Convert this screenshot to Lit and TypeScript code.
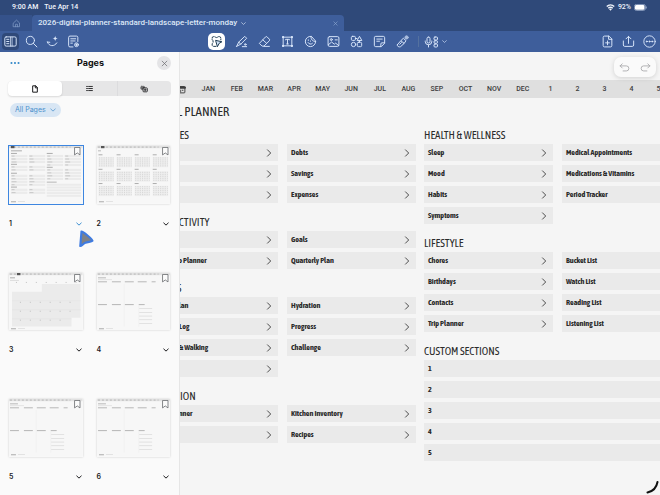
import { LitElement, html, svg, css, nothing, type SVGTemplateResult } from "lit";
import { customElement, property } from "lit/decorators.js";
import { classMap } from "lit/directives/class-map.js";

const icons: Record<string, SVGTemplateResult> = {
  panel: svg`<rect x="1.500" y="3.500" width="21" height="17" rx="2.500"/><path d="M12.500 4v16.500"/><path d="M5 8h4M5 12h4M5 16h4"/><path d="M15.500 4v16.500" opacity=".5"/>`,
  search: svg`<circle cx="10" cy="10" r="7.500"/><path d="M15.500 15.500 22 22"/>`,
  magic: svg`<path d="M2.500 13c3 8.500 13 9 17.500 1.500"/><path d="M2.500 13l4.500.5"/><path d="M17 1.500c.6 3.400 1.600 4.400 5 5-3.400.6-4.400 1.600-5 5-.6-3.400-1.600-4.400-5-5 3.400-.6 4.400-1.600 5-5z" fill="currentColor" stroke="none"/>`,
  outline: svg`<path d="M11 22H5.500a2.500 2.500 0 0 1-2.500-2.500v-15A2.500 2.500 0 0 1 5.500 2h12A2.500 2.500 0 0 1 20 4.500V12"/><path d="M7 7h9M7 11h8M7 15h3"/><circle cx="17.500" cy="18" r="3.500"/><path d="M17.500 16.500v3M16 18h3"/>`,
  lasso: svg`<path d="M11 21H6.500A2.500 2.500 0 0 1 4 18.500V16c2.500-1.500 2.500-6 0-7.500V5.500A2.500 2.500 0 0 1 6.500 3H9c2 2.500 4 2.500 6 0h2.500A2.500 2.500 0 0 1 20 5.500V9" stroke-dasharray="5 2.200"/><path d="M11 10l11 2.500-5 2.800L14 21z" fill="#cfe0f5"/>`,
  pen: svg`<path d="M3 21 7 13 18 2.500l3.500 3.500L10.500 17 3 21z"/><path d="M7 13l3.500 4"/><path d="M13.500 21.500h8"/><circle cx="19" cy="17.500" r="1.500"/>`,
  eraser: svg`<path d="M3 15 14 3.500a2 2 0 0 1 2.800 0L21 7.800a2 2 0 0 1 0 2.800L11 20.500H7.500L3 16z"/><path d="M9 9l7 6.500"/><path d="M11 21h10"/>`,
  text: svg`<path d="M4 5v14M20 5v14M5 4h14M5 20h14"/><path d="M8.500 9V8h7v1M12 8v8.500M10.500 16.500h3"/><rect x="2" y="2" width="3.600" height="3.600" fill="currentColor" stroke="none"/><rect x="18.400" y="2" width="3.600" height="3.600" fill="currentColor" stroke="none"/><rect x="2" y="18.400" width="3.600" height="3.600" fill="currentColor" stroke="none"/><rect x="18.400" y="18.400" width="3.600" height="3.600" fill="currentColor" stroke="none"/>`,
  sticker: svg`<path d="M13 2.500A9.500 9.500 0 1 0 21.500 12z"/><path d="M13 2.500c-1 5 3 10 8.500 9.500"/><path d="M7.500 14c1.500 3 5.500 4 8 1.500"/><path d="M8 9v1M12 11v.5"/>`,
  image: svg`<rect x="2" y="3" width="20" height="18" rx="2.500"/><circle cx="8" cy="8.500" r="1.800"/><path d="M2.500 18l6-5 5 4 2.500-2 5.500 4.500M15 9h4"/>`,
  shapes: svg`<rect x="2.500" y="2.500" width="7.500" height="7.500" rx="2"/><path d="M13.500 9.500 17.500 2.500l4 7z"/><circle cx="6.500" cy="17.500" r="4"/><rect x="13.500" y="13.500" width="8" height="8" rx="2"/><path d="M10 6.500h3M17.500 10v3"/>`,
  note: svg`<path d="M14.500 21.500H5A2.500 2.500 0 0 1 2.500 19V5A2.500 2.500 0 0 1 5 2.500h14A2.500 2.500 0 0 1 21.500 5v9.500z"/><path d="M14.500 21.500v-5a2 2 0 0 1 2-2h5M7 7.500h10M7 11.500h5"/>`,
  laser: svg`<path d="M2.500 18 9 10.500l6 5-6.500 6c-3 1.500-7-.5-6-3.500z"/><path d="M9 10.500 13.500 6l5 4.500-3.500 5M7 17l3-3"/><circle cx="19.500" cy="4.500" r="3" fill="currentColor" opacity=".7"/>`,
  newpage: svg`<path d="M14 2H6.500A2.500 2.500 0 0 0 4 4.500v15A2.500 2.500 0 0 0 6.500 22h11a2.500 2.500 0 0 0 2.500-2.500V8z"/><path d="M14 2v6h6M12 11v7M8.500 14.500h7"/>`,
  share: svg`<path d="M2.500 11v7.500A2.500 2.500 0 0 0 5 21h14a2.500 2.500 0 0 0 2.500-2.500V11M12 15.500V2.500M7.500 7 12 2.500 16.500 7"/>`,
  more: svg`<circle cx="12" cy="12" r="10.500"/><g fill="currentColor"><circle cx="7" cy="12" r="1"/><circle cx="12" cy="12" r="1"/><circle cx="17" cy="12" r="1"/></g>`,
  home: svg`<path d="M4 10.500 12 3l8 7.500V20.500H4z"/><path d="M9.500 20.500V14h5v6.500"/>`,
  down: svg`<path d="M3 8l9 8.500L21 8"/>`,
  right: svg`<path d="M7.500 2.500 17 12l-9.500 9.500"/>`,
  close: svg`<path d="M4 4l16 16M20 4 4 20"/>`,
  dots: svg`<g fill="currentColor" stroke="none"><circle cx="3.500" cy="12" r="2.500"/><circle cx="12" cy="12" r="2.500"/><circle cx="20.500" cy="12" r="2.500"/></g>`,
  page: svg`<path d="M13 2.500H5v19h14V8.500z"/><path d="M13 2.500v6h6"/>`,
  list: svg`<path d="M9 5h13M9 12h13M9 19h13M2 5h3M2 12h3M2 19h3"/>`,
  copies: svg`<rect x="2.500" y="4" width="11" height="9" rx="2" fill="currentColor" opacity=".6"/><rect x="9" y="8.500" width="13" height="12" rx="2.500" fill="#e6e6e7"/><path d="M15.500 11.500v6M12.500 14.500h6"/>`,
  undo: svg`<path d="M7 4 2.500 8.500 7 13M2.500 8.500H16a5.500 5.500 0 0 1 0 11H9"/>`,
  redo: svg`<path d="M17 4l4.500 4.500L17 13M21.500 8.500H8a5.500 5.500 0 0 0 0 11h7"/>`,
  calendar: svg`<rect x="3" y="4" width="18" height="17" rx="2"/><path d="M3 7h18" stroke-width="6"/><path d="M8 14h2M14 14h2M8 18h2"/>`,
};

@customElement("ui-icon")
export class UiIcon extends LitElement {
  @property() name = "";
  @property({ type: Number }) size = 12;
  @property({ type: Number }) weight = 2;

  static styles = css`
    :host { display: inline-flex; flex: none; }
    svg { display: block; fill: none; stroke: currentColor; stroke-linecap: round; stroke-linejoin: round; }
  `;

  render() {
    return html`<svg viewBox="0 0 24 24" width=${this.size} height=${this.size} stroke-width=${this.weight} aria-hidden="true">${icons[this.name]}</svg>`;
  }
}

type ThumbKind = "index" | "year" | "month" | "week";

@customElement("page-thumb")
export class PageThumb extends LitElement {
  @property() kind: ThumbKind = "index";
  @property({ type: Number }) marker = 4;

  static styles = css`
    :host { display: block; width: 100%; }
    svg { display: block; width: 100%; height: auto; }
  `;

  private bar(x: number, y: number, w: number, h = 1, fill = "#aaaaaa") {
    return svg`<rect x=${x} y=${y} width=${w} height=${h} fill=${fill}/>`;
  }

  private index() {
    const blocks = [
      { x: 2, y: 8, rows: 3 }, { x: 2, y: 19, rows: 2 }, { x: 2, y: 28, rows: 4 }, { x: 2, y: 42, rows: 2 },
      { x: 38, y: 8, rows: 4 }, { x: 38, y: 22, rows: 4 },
    ];
    return svg`
      ${this.bar(2, 4.5, 11, 0.8, "#9a9a9a")}
      ${blocks.map((b) => svg`
        ${this.bar(b.x, b.y - 1, 6, 0.7, "#8c8c8c")}
        ${Array.from({ length: b.rows }, (_, r) => [0, 18].map((dx) => svg`
          ${this.bar(b.x + dx, b.y + 1 + r * 3, 16.5, 2.2, "#ebebeb")}
          ${this.bar(b.x + dx + 0.6, b.y + 1.8 + r * 3, 3 + ((r + dx) % 3), 0.6, "#b0b0b0")}
        `))}`)}
      ${this.bar(38, 36, 10, 0.7, "#9a9a9a")}
      ${[0, 1, 2, 3, 4].map((r) => this.bar(38, 38 + r * 2.8, 34.5, 2, "#ebebeb"))}`;
  }

  private year() {
    return svg`
      ${this.bar(1, 4.5, 3, 0.8, "#aaaaaa")}
      ${Array.from({ length: 12 }, (_, i) => {
        const x = 1.5 + (i % 4) * 18.2;
        const y = 9 + Math.floor(i / 4) * 14.5;
        return svg`${this.bar(x, y - 0.5, 4, 0.8, "#999999")}
          <rect x=${x} y=${y + 2} width="15.500" height="10.500" fill="#efefef"/>
          <path d=${[0, 1, 2, 3, 4].map((r) => `M${x + 0.6} ${y + 3 + r * 2}h14.5`).join("")} stroke="#cacaca" stroke-width=".8" stroke-dasharray="1 1.300"/>`;
      })}`;
  }

  private month() {
    return svg`
      ${this.bar(1, 4.5, 5, 0.8, "#999999")}${this.bar(1, 7, 9, 0.6, "#cccccc")}
      <path d="M33 11H72V45H63V54H3V19H33z" fill="#ebebeb"/>
      <path d="M7 9.500h64M11 29.500h60M11 38.500h60M11 47.500h50" stroke="#bababa" stroke-width=".9" stroke-dasharray="1 9"/>
      <path d="M3 28h69M3 37h69M3 46h60" stroke="#e2e2e2" stroke-width=".5"/>`;
  }

  private week() {
    return svg`
      ${this.bar(1, 4.5, 8, 0.8, "#aaaaaa")}${this.bar(1, 6.6, 14, 0.5, "#d0d0d0")}
      ${[1, 15, 28, 41, 55].map((x, i) => this.bar(x, 8.5, i === 4 ? 4 : 9, 0.8, "#a6a6a6"))}
      ${[1, 15, 28, 42].map((x, i) => this.bar(x, 31.5, i === 3 ? 6 : 9, 0.8, "#a6a6a6"))}
      <path d="M27.500 11v43M42 33v21" stroke="#ececec" stroke-width=".5"/>
      ${[0, 1, 2, 3, 4].map((r) => this.bar(42.5, 35.5 + r * 3.8, 13, 0.5, "#cccccc"))}`;
  }

  render() {
    const body = { index: () => this.index(), year: () => this.year(), month: () => this.month(), week: () => this.week() }[this.kind];
    return html`<svg viewBox="0 0 74 58" aria-hidden="true">
      <rect width="74" height="58" fill="#f7f7f7"/>
      <rect width="74" height="2.200" fill="#e2e2e2"/>
      <path d="M1 1.100H62" stroke="#a4a4a4" stroke-width=".7" stroke-dasharray="2 2"/>
      ${this.bar(this.marker, 0, 3.5, 2.2, "#555555")}
      ${body()}
      ${this.bar(2, 55.8, 5, 0.8, "#999999")}${this.bar(9, 55.9, 7, 0.5, "#cccccc")}
      <path d="M66 1.500h5.500v7.500l-2.750-2-2.750 2z" fill="#fbfbfb" stroke="#66696d" stroke-width=".8"/>
    </svg>`;
  }
}

interface Section { title: string; rows: string[][]; wide?: boolean }

const leftSections: Section[] = [
  { title: "FINANCES", rows: [["Income", "Debts"], ["Budget", "Savings"], ["Bills", "Expenses"]] },
  { title: "PRODUCTIVITY", rows: [["Projects", "Goals"], ["Day To-do Planner", "Quarterly Plan"]] },
  { title: "FITNESS", rows: [["Fitness Plan", "Hydration"], ["Workout Log", "Progress"], ["Running & Walking", "Challenge"], ["Weight", ""]] },
  { title: "NUTRITION", rows: [["Meal Planner", "Kitchen Inventory"], ["Grocery", "Recipes"]] },
];

const rightSections: Section[] = [
  { title: "HEALTH & WELLNESS", rows: [["Sleep", "Medical Appointments"], ["Mood", "Medications & Vitamins"], ["Habits", "Period Tracker"], ["Symptoms", ""]] },
  { title: "LIFESTYLE", rows: [["Chores", "Bucket List"], ["Birthdays", "Watch List"], ["Contacts", "Reading List"], ["Trip Planner", "Listening List"]] },
  { title: "CUSTOM SECTIONS", wide: true, rows: [["1"], ["2"], ["3"], ["4"], ["5"]] },
];

@customElement("planner-sheet")
export class PlannerSheet extends LitElement {
  static styles = css`
    :host { display: block; overflow: hidden; background: #f5f5f5; color: #2b2b2b; font-family: "Asap Condensed", "Roboto Condensed", "Noto Sans CJK JP", sans-serif; }
    a { color: inherit; text-decoration: none; }
    .dates { display: flex; align-items: center; height: 18px; margin-top: 28px; padding-left: 177px; background: #dfdfdf; color: #3c3c3c; font: 500 7px/18px Roboto, sans-serif; }
    .today { flex: 0 0 17px; display: flex; }
    .months { display: grid; grid-template-columns: repeat(12, 1fr); flex: 0 0 343px; text-align: center; }
    .weeks { display: grid; grid-auto-flow: column; grid-auto-columns: 27px; text-align: center; }
    h1 { margin: 4px 0 0 145px; font-size: 13px; line-height: 20px; font-weight: 400; }
    .halves { display: grid; grid-template-columns: 267px 267px; gap: 8px; padding: 4px 0 0 149px; }
    .half { display: flex; flex-direction: column; gap: 10px; }
    h2 { margin: 0; font-size: 11px; line-height: 18px; font-weight: 400; white-space: nowrap; }
    .rows { display: grid; grid-template-columns: 1fr 1fr; gap: 4px 9px; }
    .rows.wide { grid-template-columns: 1fr; }
    .row { display: flex; align-items: center; justify-content: space-between; height: 17px; padding: 0 5px 0 4px; background: #eaeaea; font-size: 8px; line-height: 17px; font-weight: 700; white-space: nowrap; }
  `;

  private section(s: Section) {
    return html`<section>
      <h2>${s.title}</h2>
      <div class=${classMap({ rows: true, wide: !!s.wide })}>
        ${s.rows.flat().map((label) => label
          ? html`<a class="row" href="#">${label}${s.wide ? nothing : html`<ui-icon name="right" size="8" weight="2.5"></ui-icon>`}</a>`
          : html`<span></span>`)}
      </div>
    </section>`;
  }

  render() {
    const months = ["JAN", "FEB", "MAR", "APR", "MAY", "JUN", "JUL", "AUG", "SEP", "OCT", "NOV", "DEC"];
    return html`
      <nav class="dates" aria-label="Dates">
        <a class="today" href="#" aria-label="Calendar"><ui-icon name="calendar" size="9" weight="2.5"></ui-icon></a>
        <div class="months">${months.map((m) => html`<a href="#">${m}</a>`)}</div>
        <div class="weeks">${[1, 2, 3, 4, 5].map((w) => html`<a href="#">${w}</a>`)}</div>
      </nav>
      <h1>DIGITAL PLANNER</h1>
      <div class="halves">
        <div class="half">${leftSections.map((s) => this.section(s))}</div>
        <div class="half">${rightSections.map((s) => this.section(s))}</div>
      </div>`;
  }
}

@customElement("pages-panel")
export class PagesPanel extends LitElement {
  static styles = css`
    :host { display: block; background: #fafafa; border-right: 1px solid #e6e6e6; font-family: Inter, sans-serif; color: #1c1c1e; }
    button { border: 0; padding: 0; margin: 0; background: none; font: inherit; color: inherit; display: flex; align-items: center; justify-content: center; }
    header { display: grid; grid-template-columns: 1fr auto 1fr; align-items: center; height: 22px; padding: 0 8px 0 10px; }
    h2 { margin: 0; font-size: 9px; line-height: 14px; font-weight: 700; color: #111111; }
    .menu { color: #2f86c8; justify-self: start; }
    .close { justify-self: end; width: 14px; height: 14px; border-radius: 50%; background: #e4e4e6; color: #6b6b70; }
    .segments { display: grid; grid-template-columns: repeat(3, 1fr); margin: 7px 8px 0; height: 15px; border-radius: 4px; background: #e6e6e7; }
    .segments button + button + button { border-left: 1px solid #dcdcde; }
    .segments .on { background: #ffffff; border-radius: 4px; box-shadow: 0 1px 2px #00000022; }
    .filter { margin: 7px 0 0 10px; height: 14px; padding: 0 5px; gap: 4px; border-radius: 7px; background: #d8e6f4; color: #4a90cc; font-size: 7px; line-height: 14px; }
    .grid { display: grid; grid-template-columns: 1fr 1fr; gap: 44px 14px; padding: 29px 9px 0; }
    .thumb { width: 100%; box-shadow: 0 0 2px #00000030; }
    .thumb.on { outline: 1px solid #3d86e0; box-shadow: none; }
    .caption { display: flex; align-items: center; justify-content: space-between; margin-top: 15px; height: 10px; padding-right: 1px; font-size: 7px; line-height: 10px; font-weight: 600; }
    .blue { color: #3d8fd1; }
  `;

  render() {
    const pages: { kind: ThumbKind; marker: number }[] = [
      { kind: "index", marker: 2 }, { kind: "year", marker: 4 }, { kind: "month", marker: 8 },
      { kind: "week", marker: 80 }, { kind: "week", marker: 80 }, { kind: "week", marker: 80 },
    ];
    return html`
      <header>
        <button class="menu" aria-label="More"><ui-icon name="dots" size="10"></ui-icon></button>
        <h2>Pages</h2>
        <button class="close" aria-label="Close"><ui-icon name="close" size="7" weight="2.5"></ui-icon></button>
      </header>
      <div class="segments">
        <button class="on" aria-label="Pages"><ui-icon name="page" size="8" weight="3"></ui-icon></button>
        <button aria-label="Outline"><ui-icon name="list" size="7" weight="3"></ui-icon></button>
        <button aria-label="Collections"><ui-icon name="copies" size="8" weight="2.5"></ui-icon></button>
      </div>
      <button class="filter">All Pages <ui-icon name="down" size="6" weight="3"></ui-icon></button>
      <div class="grid">
        ${pages.map((p, i) => html`<div>
          <button class=${classMap({ thumb: true, on: i === 0 })} aria-label="Open page ${i + 1}">
            <page-thumb .kind=${p.kind} .marker=${p.marker}></page-thumb>
          </button>
          <div class="caption"><span>${i + 1}</span>
            <button class=${classMap({ blue: i === 0 })} aria-label="Page ${i + 1} options"><ui-icon name="down" size="6" weight="4"></ui-icon></button>
          </div>
        </div>`)}
      </div>`;
  }
}

@customElement("app-root")
export class AppRoot extends LitElement {
  static styles = css`
    :host { display: flex; flex-direction: column; min-height: 100vh; position: relative; overflow: hidden; font-family: Inter, sans-serif; background: #f5f5f5; }
    button { border: 0; padding: 0; margin: 0; background: none; font: inherit; color: inherit; display: flex; align-items: center; justify-content: center; }
    .status { display: flex; align-items: center; gap: 6px; height: 15px; padding: 0 13px 0 12px; background: #2f4979; color: #f0f4fb; font: 500 7px/15px Roboto, sans-serif; }
    .power { display: flex; align-items: center; gap: 3px; margin-left: auto; }
    .tabs { display: flex; height: 16px; background: #2f4979; color: #dfe8f7; }
    .home { width: 32px; background: #35528a; color: #7f9ac6; }
    .tab { display: flex; align-items: center; flex: 0 1 312px; box-sizing: border-box; padding: 0 6px; gap: 4px; background: #3e5e9b; border-radius: 4px 4px 0 0; font: 500 8px/16px Roboto, sans-serif; white-space: nowrap; }
    .tab .x { margin-left: auto; color: #8fa8d0; }
    .tools { display: grid; grid-template-columns: 1fr auto 1fr; align-items: center; height: 21px; background: #3e5e9b; color: #d8e5fa; }
    .group { display: flex; align-items: center; }
    .group button { height: 18px; width: 23px; }
    .edge button { width: 21px; }
    .end { justify-self: end; }
    .edge .panel-toggle ui-icon { background: #2f4979; border-radius: 4px; padding: 2px; }
    .lasso ui-icon { background: #ffffff; border-radius: 5px; padding: 2px; color: #1d3a50; }
    .lasso { margin-right: 2px; }
    .rule { width: 1px; height: 11px; margin: 0 5px 0 4px; background: #54719f; }
    .group .mic { width: 31px; gap: 3px; justify-content: flex-start; }
    .work { display: grid; flex: 1; grid-template-columns: 180px minmax(0, 1fr); }
    planner-sheet { grid-area: 1 / 1 / 2 / 3; }
    pages-panel { grid-area: 1 / 1; z-index: 1; }
    .history { position: absolute; right: 4px; top: 57px; z-index: 2; display: flex; justify-content: space-around; align-items: center; width: 42px; height: 20px; border-radius: 7px; background: #fafafa; color: #a4a4a6; box-shadow: 0 1px 5px #00000026; }
    .pointer { position: absolute; left: 77px; top: 228px; z-index: 3; }
    .arc { position: absolute; right: 1px; bottom: 1px; z-index: 3; }
  `;

  private tool(name: string, label: string, cls = "") {
    return html`<button class=${cls} aria-label=${label}><ui-icon name=${name} size="13" weight="1.8"></ui-icon></button>`;
  }

  render() {
    return html`
      <div class="status">
        <span>9:00 AM</span><span>Tue Apr 14</span>
        <span class="power">
          <svg width="9" height="7" viewBox="0 0 18 14" aria-hidden="true"><path d="M1.500 5a11 11 0 0 1 15 0M4.500 8.500a6.500 6.500 0 0 1 9 0" fill="none" stroke="#f0f4fb" stroke-width="2.800"/><path d="M6.200 10.300a4 4 0 0 1 5.600 0L9 13.500z" fill="#f0f4fb"/></svg>
          <span>92%</span>
          <svg width="13" height="7" viewBox="0 0 13 7" aria-hidden="true"><rect x=".4" y=".4" width="11" height="6" rx="2" fill="none" stroke="#9fb0cf" stroke-width=".8"/><rect x="1" y="1" width="9.500" height="4.800" rx="1.400" fill="#ffffff"/><path d="M12.400 2.500v2" stroke="#9fb0cf" stroke-width=".8"/></svg>
        </span>
      </div>
      <div class="tabs">
        <button class="home" aria-label="Home"><ui-icon name="home" size="9"></ui-icon></button>
        <div class="tab"><span>2026-digital-planner-standard-landscape-letter-monday</span>
          <ui-icon name="down" size="5" weight="3"></ui-icon>
          <button class="x" aria-label="Close tab"><ui-icon name="close" size="5" weight="3"></ui-icon></button>
        </div>
      </div>
      <div class="tools">
        <div class="group edge">
          ${this.tool("panel", "Sidebar", "panel-toggle")}${this.tool("search", "Search")}${this.tool("magic", "Assist")}${this.tool("outline", "Page setup")}
        </div>
        <div class="group">
          ${this.tool("lasso", "Lasso", "lasso")}${this.tool("pen", "Pen")}${this.tool("eraser", "Eraser")}${this.tool("text", "Text")}
          ${this.tool("sticker", "Stickers")}${this.tool("image", "Image")}${this.tool("shapes", "Elements")}${this.tool("note", "Sticky note")}${this.tool("laser", "Laser pointer")}
          <span class="rule"></span>
          <button class="mic" aria-label="Record">
            <svg width="15" height="12" viewBox="0 0 30 24" fill="none" stroke="currentColor" stroke-width="2" stroke-linecap="round" aria-hidden="true">
              <rect x="6" y="2" width="6" height="12" rx="3"/><path d="M2.500 10v1a6.500 6.500 0 0 0 13 0v-1M9 18v4"/>
              <rect x="20" y="2" width="7" height="6" rx="2"/><rect x="20" y="9.500" width="7" height="5" rx="2"/><rect x="20" y="16" width="7" height="6" rx="2"/>
            </svg>
            <ui-icon name="down" size="5" weight="3"></ui-icon>
          </button>
        </div>
        <div class="group edge end">
          ${this.tool("newpage", "Add page")}${this.tool("share", "Share")}${this.tool("more", "More")}
        </div>
      </div>
      <div class="work">
        <pages-panel></pages-panel>
        <planner-sheet></planner-sheet>
      </div>
      <div class="history">
        <button aria-label="Undo"><ui-icon name="undo" size="11" weight="1.8"></ui-icon></button>
        <button aria-label="Redo"><ui-icon name="redo" size="11" weight="1.8"></ui-icon></button>
      </div>
      <svg class="pointer" width="19" height="21" viewBox="0 0 19 21" aria-hidden="true"><path d="M4.500 3.500 3.300 18c.8.600 3-2.500 5-3.300 2.200-.9 7-1 7.200-1.900C15.800 11.500 5.500 3 4.500 3.500z" fill="#7d8187" stroke="#3f7be0" stroke-width="2.200" stroke-linejoin="round"/></svg>
      <svg class="arc" width="13" height="13" viewBox="0 0 13 13" aria-hidden="true"><path d="M11.500 1a13 13 0 0 1-10 10.500" fill="none" stroke="#111111" stroke-width="2" stroke-linecap="round"/></svg>
    `;
  }
}
